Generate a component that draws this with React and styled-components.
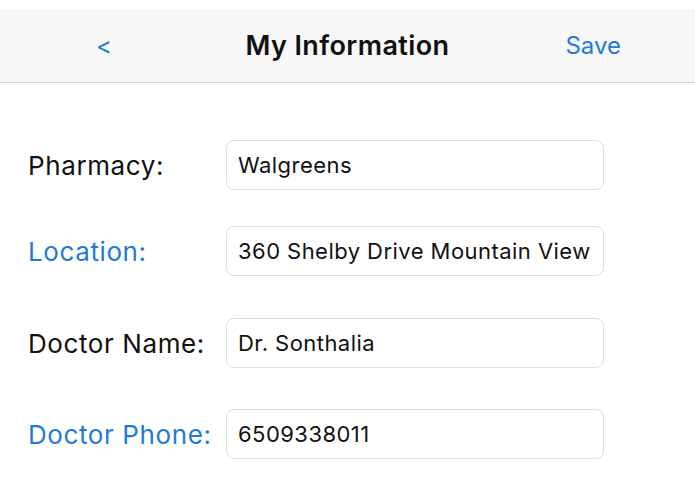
import styled, { createGlobalStyle } from 'styled-components';

const GlobalStyle = createGlobalStyle`
  body {
    margin: 0;
    background: #fff;
    font-family: Inter, "Liberation Sans", Arial, sans-serif;
  }
`;

const Page = styled.div`
  padding-top: 9px;
  background: #fff;
`;

const NavBar = styled.div`
  display: grid;
  grid-template-columns: 200px 1fr 200px;
  align-items: center;
  height: 73px;
  background: #f7f7f7;
  border-bottom: 1px solid #d4d4d4;
`;

const NavButton = styled.span`
  color: #1f7bd8;
  font-size: 24px;
  text-align: ${p => (p.right ? 'right' : 'left')};
  padding: ${p => (p.right ? '0 74px 0 0' : '0 0 0 96px')};
`;

const Title = styled.h1`
  margin: 0;
  text-align: center;
  font-size: 27px;
  font-weight: 600;
  color: #111;
  letter-spacing: 0.4px;
`;

const Form = styled.div`
  padding: 57px 0 0 28px;
`;

const Row = styled.div`
  display: flex;
  align-items: center;
  margin-top: ${p => p.spacing || 0}px;
`;

const Label = styled.label`
  width: 198px;
  font-size: 26px;
  letter-spacing: 0.6px;
  color: ${p => (p.link ? '#1f7bd8' : '#111')};
`;

const Field = styled.div`
  box-sizing: border-box;
  width: 378px;
  height: 50px;
  display: flex;
  align-items: center;
  padding: 0 11px;
  border: 1px solid #dedede;
  border-radius: 8px;
  font-size: 22px;
  letter-spacing: 0.45px;
  color: #111;
  white-space: nowrap;
  overflow: hidden;
`;

const rows = [
  { label: 'Pharmacy:', value: 'Walgreens', spacing: 0 },
  { label: 'Location:', value: '360 Shelby Drive Mountain View', link: true, spacing: 36 },
  { label: 'Doctor Name:', value: 'Dr. Sonthalia', spacing: 42 },
  { label: 'Doctor Phone:', value: '6509338011', link: true, spacing: 41 },
];

export default function App() {
  return (
    <Page>
      <GlobalStyle />
      <NavBar>
        <NavButton>&lt;</NavButton>
        <Title>My Information</Title>
        <NavButton right>Save</NavButton>
      </NavBar>
      <Form>
        {rows.map(r => (
          <Row key={r.label} spacing={r.spacing}>
            <Label link={r.link}>{r.label}</Label>
            <Field>{r.value}</Field>
          </Row>
        ))}
      </Form>
    </Page>
  );
}
